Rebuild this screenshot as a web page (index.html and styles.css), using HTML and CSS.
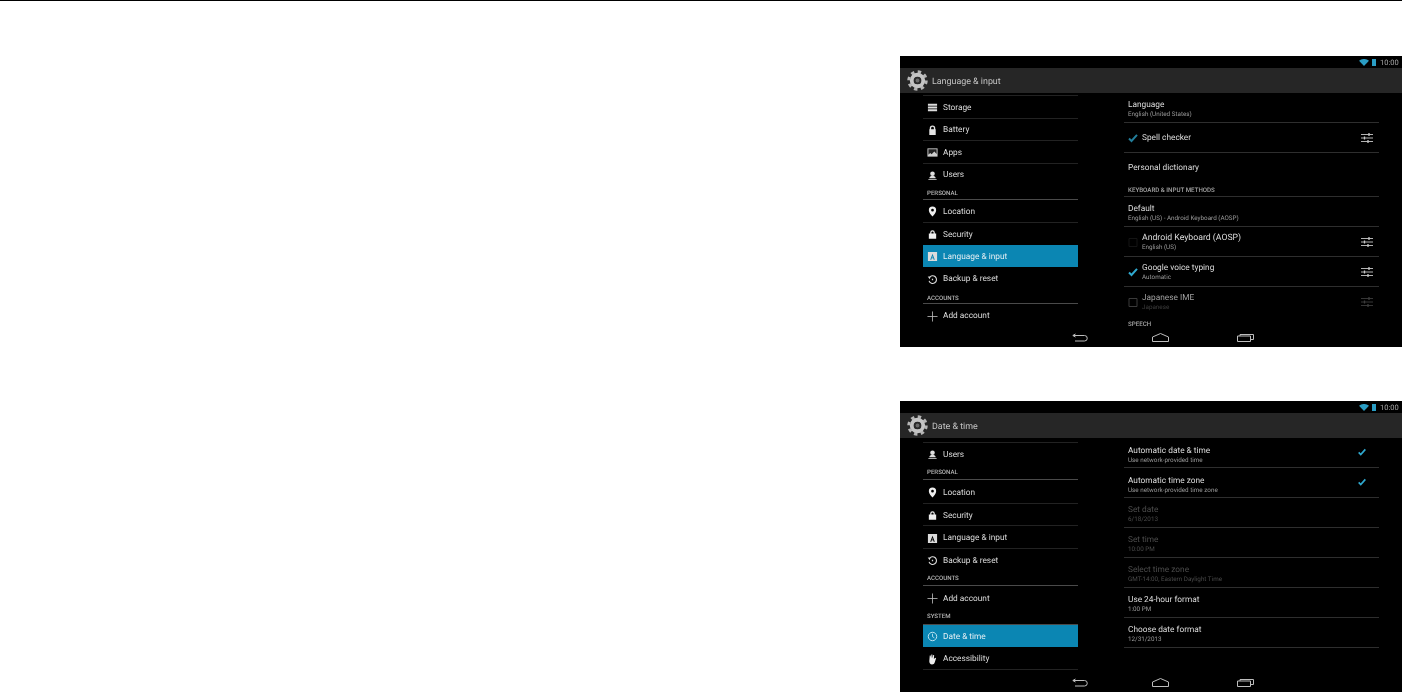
FILE: index.html
```html
<!DOCTYPE html>
<html lang="en">
<head>
    <meta charset="UTF-8">
    <title>Android settings screenshots</title>
    <link rel="stylesheet" href="styles.css">
</head>
<body>
    <svg class="icon-defs" aria-hidden="true">
        <symbol id="i-gear" viewBox="0 0 24 24">
            <circle cx="12" cy="12" r="10" fill="none" stroke="#b5b5b5" stroke-width="3.4" stroke-dasharray="3.9 3.95"/>
            <circle cx="12" cy="12" r="6.6" fill="none" stroke="#c4c4c4" stroke-width="4.4"/>
            <circle cx="12" cy="12" r="4" fill="#2a2a2a"/>
            <circle cx="12" cy="12" r="2.2" fill="#6a6a6a"/>
        </symbol>
        <symbol id="i-storage" viewBox="0 0 12 12">
            <path d="M1 2h10v2H1zM1 5h10v2H1zM1 8h10v2H1z" fill="#ddd"/>
        </symbol>
        <symbol id="i-battery" viewBox="0 0 12 12">
            <path d="M3 4.5V3.5a3 3 0 0 1 6 0v1h.5v6.500h-7v-6.500zM4.500 4.500h3V3.500a1.500 1.500 0 0 0-3 0z" fill="#e4e4e4"/>
        </symbol>
        <symbol id="i-apps" viewBox="0 0 12 12">
            <path d="M.5 1.500h11v9H.5z" fill="#cfcfcf"/>
            <path d="M1.500 2.500h9v5L8 5 5 8 3.500 6.500l-2 2z" fill="#222"/>
        </symbol>
        <symbol id="i-users" viewBox="0 0 12 12">
            <circle cx="6" cy="4" r="2.500" fill="#ddd"/>
            <path d="M2.500 9c0-2 1.500-2.500 3.500-2.500s3.500.5 3.500 2.500zM1.500 10h9v1h-9z" fill="#ddd"/>
        </symbol>
        <symbol id="i-pin" viewBox="0 0 12 12">
            <path fill-rule="evenodd" d="M6 .5a4 4 0 0 1 4 4c0 2.500-2.500 5-4 7-1.500-2-4-4.500-4-7a4 4 0 0 1 4-4zm0 2.500a1.500 1.500 0 1 0 0 3 1.500 1.500 0 0 0 0-3z" fill="#eee"/>
        </symbol>
        <symbol id="i-lock" viewBox="0 0 12 12">
            <path fill-rule="evenodd" d="M3.500 5V3.800a2.500 2.500 0 0 1 5 0V5H10v5.500H2V5zM4.800 5h2.400V3.800a1.200 1.200 0 0 0-2.400 0z" fill="#eee"/>
        </symbol>
        <symbol id="i-lang" viewBox="0 0 12 12">
            <path fill-rule="evenodd" d="M1 1h10v10H1zM6 3 3.500 9.500h1.200l.5-1.500h1.600l.5 1.500h1.200L6 3zm0 2.500.5 1.500h-1z" fill="#dcdcdc"/>
        </symbol>
        <symbol id="i-backup" viewBox="0 0 12 12">
            <path d="M2.500 4A4.200 4.200 0 1 1 2.200 7.500" fill="none" stroke="#ddd" stroke-width="1.200"/>
            <path d="M.8 2.800 3.800 3 3 5.800zM5.300 5.300h1.400v1.400H5.300z" fill="#ddd"/>
        </symbol>
        <symbol id="i-plus" viewBox="0 0 12 12">
            <path d="M6 .5v11M.5 6h11" stroke="#bbb" stroke-width=".9"/>
        </symbol>
        <symbol id="i-clock" viewBox="0 0 12 12">
            <circle cx="6" cy="6" r="4.600" fill="none" stroke="#cdeaf5" stroke-width="1"/>
            <path d="M6 3v3.200l2 1.200" fill="none" stroke="#cdeaf5" stroke-width=".9"/>
        </symbol>
        <symbol id="i-hand" viewBox="0 0 12 12">
            <path d="M3 1.500h1l.5 3 .3-4h1l.3 4 .7-3.500h1l-.3 4.500 1.500-1.500.9.700L8.500 9c-.5 1.500-1.500 2.500-3 2.500-2 0-3-1.500-3-3.500z" fill="#eee"/>
        </symbol>
        <symbol id="i-check" viewBox="0 0 12 12">
            <path d="M2 6.500 4.500 9 10 2.800" fill="none" stroke="#2fa9cf" stroke-width="2"/>
        </symbol>
        <symbol id="i-box" viewBox="0 0 12 12">
            <path d="M2 2.500h8v8H2z" fill="none" stroke="#3a3a3a" stroke-width="1"/>
        </symbol>
        <symbol id="i-sliders" viewBox="0 0 12 12">
            <path d="M0 2.500h12M0 6h12M0 9.500h12" stroke="#c8c8c8" stroke-width=".9"/>
            <path d="M8 1v3M3.500 4.500v3M7 8v3" stroke="#c8c8c8" stroke-width="1.300"/>
        </symbol>
        <symbol id="i-wifi" viewBox="0 0 10 7">
            <path d="M0 1.700C3-.6 7-.6 10 1.700L5 7z" fill="#2a9dc4"/>
        </symbol>
        <symbol id="i-back" viewBox="0 0 16 9">
            <path d="M3.500 1 .8 2.500l2.700 1.500M1 2.500h11.500a2.500 2.500 0 0 1 0 5.500H3" fill="none" stroke="#bdbdbd" stroke-width="1"/>
        </symbol>
        <symbol id="i-home" viewBox="0 0 17 9">
            <path d="M.5 4 8.500.5l8 3.500v4.500H.5z" fill="none" stroke="#bdbdbd" stroke-width="1"/>
        </symbol>
        <symbol id="i-recent" viewBox="0 0 17 9">
            <path d="M.5 3h13v5.500H.5zM3 3V1.500h13.500V6.500H14" fill="none" stroke="#bdbdbd" stroke-width="1"/>
        </symbol>
    </svg>

    <div class="top-rule"></div>

    <div class="shots">
        <!-- Language & input -->
        <section class="screen">
            <div class="status-bar">
                <svg class="st-wifi"><use href="#i-wifi"/></svg>
                <span class="st-batt"></span>
                <span class="st-time">10:00</span>
            </div>
            <header class="action-bar">
                <svg class="gear"><use href="#i-gear"/></svg>
                <span class="action-title">Language &amp; input</span>
            </header>
            <div class="screen-body">
                <nav class="side side-lang">
                    <a class="side-row"><svg class="side-icon"><use href="#i-storage"/></svg>Storage</a>
                    <a class="side-row"><svg class="side-icon"><use href="#i-battery"/></svg>Battery</a>
                    <a class="side-row"><svg class="side-icon"><use href="#i-apps"/></svg>Apps</a>
                    <a class="side-row"><svg class="side-icon"><use href="#i-users"/></svg>Users</a>
                    <div class="side-head">PERSONAL</div>
                    <a class="side-row"><svg class="side-icon"><use href="#i-pin"/></svg>Location</a>
                    <a class="side-row"><svg class="side-icon"><use href="#i-lock"/></svg>Security</a>
                    <a class="side-row selected"><svg class="side-icon"><use href="#i-lang"/></svg>Language &amp; input</a>
                    <a class="side-row"><svg class="side-icon"><use href="#i-backup"/></svg>Backup &amp; reset</a>
                    <div class="side-head">ACCOUNTS</div>
                    <a class="side-row"><svg class="side-icon"><use href="#i-plus"/></svg>Add account</a>
                </nav>
                <div class="detail">
                    <div class="pref">
                        <div class="pref-text"><div class="pref-title">Language</div><div class="pref-sub">English (United States)</div></div>
                    </div>
                    <div class="pref raised">
                        <svg class="pref-check dim-check"><use href="#i-check"/></svg>
                        <div class="pref-text"><div class="pref-title">Spell checker</div></div>
                        <svg class="pref-tune"><use href="#i-sliders"/></svg>
                    </div>
                    <div class="pref no-rule raised">
                        <div class="pref-text"><div class="pref-title">Personal dictionary</div></div>
                    </div>
                    <div class="detail-head">KEYBOARD &amp; INPUT METHODS</div>
                    <div class="pref">
                        <div class="pref-text"><div class="pref-title">Default</div><div class="pref-sub">English (US) - Android Keyboard (AOSP)</div></div>
                    </div>
                    <div class="pref raised">
                        <svg class="pref-check faint-box"><use href="#i-box"/></svg>
                        <div class="pref-text"><div class="pref-title wide-title">Android Keyboard (AOSP)</div><div class="pref-sub">English (US)</div></div>
                        <svg class="pref-tune"><use href="#i-sliders"/></svg>
                    </div>
                    <div class="pref raised">
                        <svg class="pref-check"><use href="#i-check"/></svg>
                        <div class="pref-text"><div class="pref-title">Google voice typing</div><div class="pref-sub">Automatic</div></div>
                        <svg class="pref-tune"><use href="#i-sliders"/></svg>
                    </div>
                    <div class="pref no-rule dim-ime raised">
                        <svg class="pref-check"><use href="#i-box"/></svg>
                        <div class="pref-text"><div class="pref-title">Japanese IME</div><div class="pref-sub">Japanese</div></div>
                        <svg class="pref-tune"><use href="#i-sliders"/></svg>
                    </div>
                    <div class="detail-head">SPEECH</div>
                </div>
            </div>
            <footer class="nav-bar">
                <svg class="nav-back"><use href="#i-back"/></svg>
                <svg class="nav-home"><use href="#i-home"/></svg>
                <svg class="nav-recent"><use href="#i-recent"/></svg>
            </footer>
        </section>

        <!-- Date & time -->
        <section class="screen">
            <div class="status-bar">
                <svg class="st-wifi"><use href="#i-wifi"/></svg>
                <span class="st-batt"></span>
                <span class="st-time">10:00</span>
            </div>
            <header class="action-bar">
                <svg class="gear"><use href="#i-gear"/></svg>
                <span class="action-title">Date &amp; time</span>
            </header>
            <div class="screen-body">
                <nav class="side side-date">
                    <a class="side-row"><svg class="side-icon"><use href="#i-users"/></svg>Users</a>
                    <div class="side-head">PERSONAL</div>
                    <a class="side-row"><svg class="side-icon"><use href="#i-pin"/></svg>Location</a>
                    <a class="side-row"><svg class="side-icon"><use href="#i-lock"/></svg>Security</a>
                    <a class="side-row"><svg class="side-icon"><use href="#i-lang"/></svg>Language &amp; input</a>
                    <a class="side-row"><svg class="side-icon"><use href="#i-backup"/></svg>Backup &amp; reset</a>
                    <div class="side-head">ACCOUNTS</div>
                    <a class="side-row"><svg class="side-icon"><use href="#i-plus"/></svg>Add account</a>
                    <div class="side-head">SYSTEM</div>
                    <a class="side-row selected"><svg class="side-icon"><use href="#i-clock"/></svg>Date &amp; time</a>
                    <a class="side-row last"><svg class="side-icon"><use href="#i-hand"/></svg>Accessibility</a>
                </nav>
                <div class="detail">
                    <div class="pref tick-row">
                        <div class="pref-text"><div class="pref-title">Automatic date &amp; time</div><div class="pref-sub">Use network-provided time</div></div>
                        <svg class="pref-tick"><use href="#i-check"/></svg>
                    </div>
                    <div class="pref tick-row">
                        <div class="pref-text"><div class="pref-title">Automatic time zone</div><div class="pref-sub">Use network-provided time zone</div></div>
                        <svg class="pref-tick"><use href="#i-check"/></svg>
                    </div>
                    <div class="pref disabled">
                        <div class="pref-text"><div class="pref-title">Set date</div><div class="pref-sub">6/18/2013</div></div>
                    </div>
                    <div class="pref disabled">
                        <div class="pref-text"><div class="pref-title">Set time</div><div class="pref-sub">10:00 PM</div></div>
                    </div>
                    <div class="pref disabled">
                        <div class="pref-text"><div class="pref-title">Select time zone</div><div class="pref-sub">GMT-14:00, Eastern Daylight Time</div></div>
                    </div>
                    <div class="pref">
                        <div class="pref-text"><div class="pref-title">Use 24-hour format</div><div class="pref-sub">1:00 PM</div></div>
                    </div>
                    <div class="pref">
                        <div class="pref-text"><div class="pref-title">Choose date format</div><div class="pref-sub">12/31/2013</div></div>
                    </div>
                </div>
            </div>
            <footer class="nav-bar">
                <svg class="nav-back"><use href="#i-back"/></svg>
                <svg class="nav-home"><use href="#i-home"/></svg>
                <svg class="nav-recent"><use href="#i-recent"/></svg>
            </footer>
        </section>
    </div>
</body>
</html>
```

FILE: styles.css
```css
html, body {
    margin: 0;
    padding: 0;
    height: 100%;
    background: #fff;
    overflow: hidden;
    font-family: "Roboto", "Liberation Sans", sans-serif;
    text-rendering: geometricPrecision;
}
.icon-defs {
    display: none;
}
.top-rule {
    height: 1px;
    background: #000;
}
.shots {
    display: flex;
    flex-direction: column;
    align-items: flex-end;
    gap: 54px;
    padding-top: 55px;
}

/* one tablet screenshot */
.screen {
    width: 502px;
    height: 291px;
    background: #000;
    color: #ddd;
    display: flex;
    flex-direction: column;
    overflow: hidden;
    filter: blur(0.4px);
}
.status-bar {
    height: 12px;
    display: flex;
    align-items: center;
    justify-content: flex-end;
    padding-right: 3px;
    flex: none;
}
.st-wifi {
    width: 10px;
    height: 7px;
    margin-right: 3px;
}
.st-batt {
    width: 4px;
    height: 7px;
    background: #2a9dc4;
    margin-right: 4px;
}
.st-time {
    font-size: 7.5px;
    color: #a8a8a8;
    width: 19px;
}
.action-bar {
    height: 25px;
    flex: none;
    background: #262626;
    display: flex;
    align-items: center;
    padding-left: 7px;
}
.gear {
    width: 21px;
    height: 21px;
    margin-right: 4px;
}
.action-title {
    font-size: 8.9px;
    margin-top: 2px;
    color: #c4c4c4;
}
.screen-body {
    height: 234px;
    flex: none;
    overflow: hidden;
    display: flex;
    align-items: flex-start;
}

/* left list */
.side {
    width: 155px;
    margin-left: 23px;
    flex: none;
    box-sizing: border-box;
}
.side-lang {
    padding-top: 2px;
}
.side-date {
    padding-top: 4px;
}
.side-row {
    height: 22.5px;
    box-sizing: border-box;
    border-top: 1px solid #222;
    padding-top: 2px;
    display: flex;
    align-items: center;
    font-size: 8.3px;
    color: #dcdcdc;
}
.side-date .side-row {
    height: 22.6px;
}
.side-head + .side-row {
    border-top: 0;
}
.side-row.selected {
    background: #0b86b3;
    color: #e4eef3;
    border-top: 0;
}
.side-row.selected + .side-row {
    border-top: 0;
}
.side-row.last {
    border-bottom: 1px solid #222;
}
.side-icon {
    width: 11px;
    height: 11px;
    margin: 0 5px 0 4px;
    flex: none;
}
.side-head {
    height: 14.5px;
    box-sizing: border-box;
    border-bottom: 1px solid #4a4a4a;
    padding: 5px 0 0 4px;
    font-size: 6.1px;
    line-height: 8px;
    font-weight: 500;
    color: #b5b5b5;
}
.side-date .side-head {
    height: 15.7px;
    padding-top: 4px;
}

/* right list */
.detail {
    width: 255px;
    margin-left: 46px;
    flex: none;
}
.pref {
    height: 30px;
    box-sizing: border-box;
    border-bottom: 1px solid #2e2e2e;
    display: flex;
    align-items: center;
    padding: 2px 0 0 4px;
}
.pref.no-rule {
    border-bottom: 0;
}
.pref.raised {
    padding-bottom: 1px;
}
.pref.no-rule.raised {
    padding-bottom: 3px;
}
.pref.tick-row {
    padding-top: 4px;
}
.pref-text {
    flex: 1;
}
.pref-title {
    font-size: 8.3px;
    line-height: 10px;
    color: #dcdcdc;
}
.wide-title {
    font-size: 8.7px;
}
.pref-sub {
    font-size: 6.3px;
    line-height: 8px;
    color: #9a9a9a;
}
.pref-check {
    width: 12px;
    height: 12px;
    margin: 0 3px 0 -1px;
    flex: none;
}
.dim-check {
    opacity: 0.75;
}
.faint-box {
    opacity: 0.35;
}
.pref-tune {
    width: 12px;
    height: 12px;
    margin-right: 6px;
    flex: none;
}
.pref-tick {
    width: 10px;
    height: 10px;
    margin: 0 12px 6px 0;
    flex: none;
}
.pref.disabled .pref-title {
    color: #4c4c4c;
}
.pref.disabled .pref-sub {
    color: #4a4a4a;
}
.dim-ime .pref-title {
    color: #a0a0a0;
}
.dim-ime .pref-sub {
    color: #3c3c3c;
}
.dim-ime .pref-tune {
    opacity: 0.3;
}
.detail-head {
    height: 14px;
    box-sizing: border-box;
    border-bottom: 1px solid #2e2e2e;
    padding: 3px 0 0 4px;
    font-size: 6.2px;
    line-height: 8px;
    font-weight: 500;
    color: #a5a5a5;
}

/* bottom buttons */
.nav-bar {
    height: 20px;
    flex: none;
    display: flex;
    align-items: center;
    padding-left: 172px;
}
.nav-bar svg {
    height: 9px;
    flex: none;
}
.nav-back {
    width: 16px;
    margin-right: 64px;
}
.nav-home {
    width: 17px;
    margin-right: 68px;
}
.nav-recent {
    width: 17px;
}
```
